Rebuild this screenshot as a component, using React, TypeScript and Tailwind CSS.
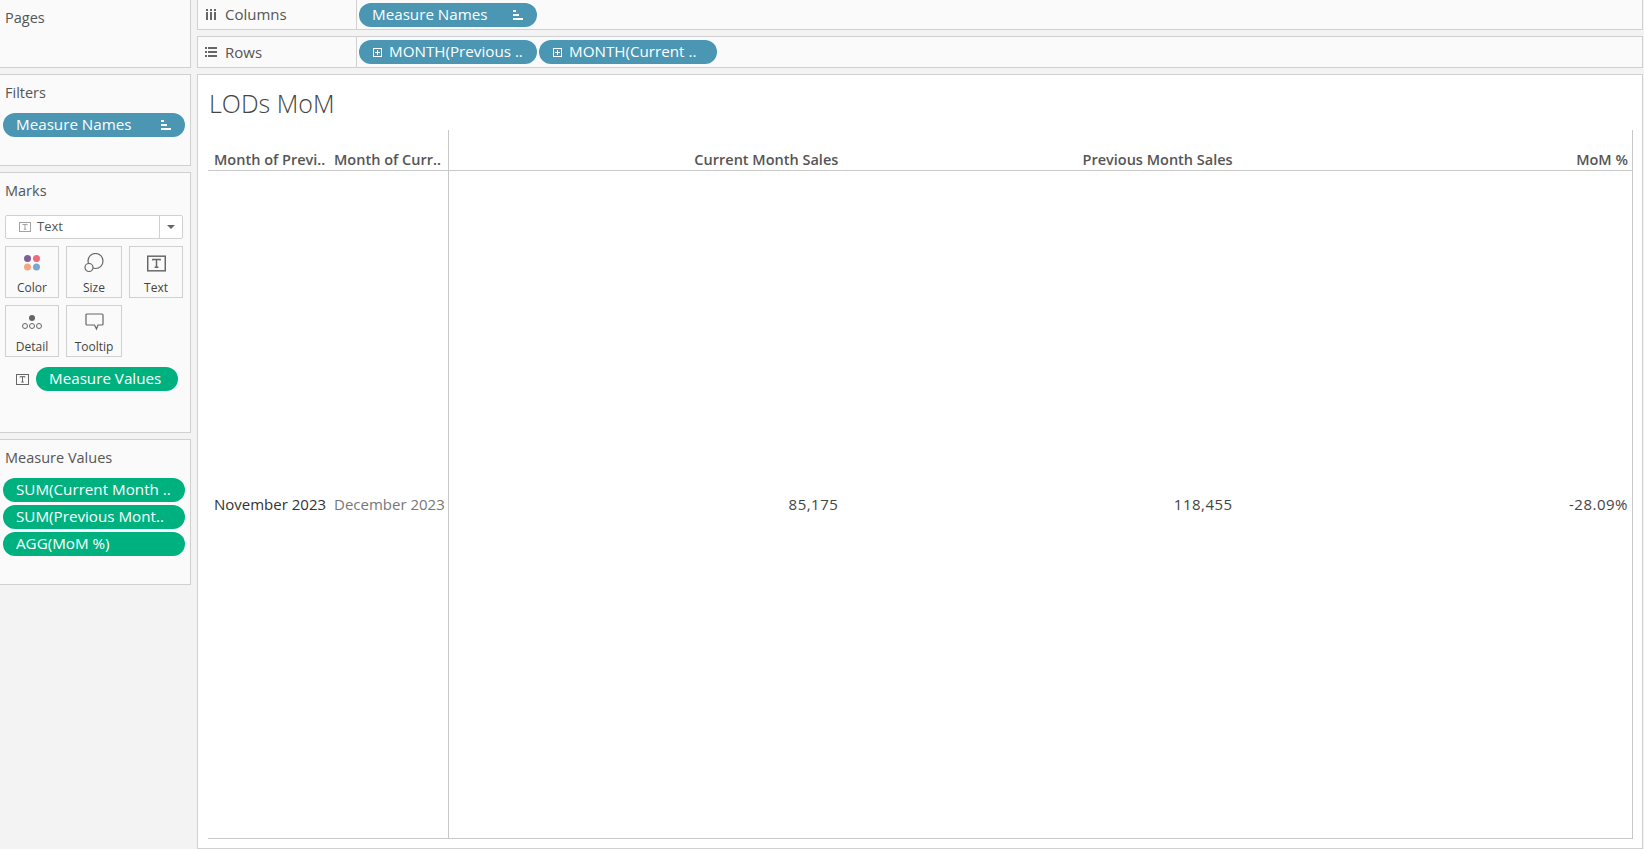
const font = "font-['Open_Sans',sans-serif]"

function SortIcon() {
  return (
    <svg width="10" height="10" viewBox="0 0 10 10" className="shrink-0" fill="#fff">
      <rect x="0" y="0" width="3" height="2" />
      <rect x="0" y="4" width="6" height="2" />
      <rect x="0" y="8" width="10" height="2" />
    </svg>
  )
}

function PlusBox() {
  return (
    <svg width="9" height="9" viewBox="0 0 9 9" className="shrink-0" fill="none" stroke="#fff" strokeWidth="1" shapeRendering="crispEdges">
      <rect x="0.5" y="0.5" width="8" height="8" />
      <path d="M2 4.5h5M4.5 2v5" />
    </svg>
  )
}

function TBox({ size = 13, color = "#777" }: { size?: number; color?: string }) {
  return (
    <svg width={size} height={size - 2} viewBox="0 0 13 11" className="shrink-0" fill="none" stroke={color} strokeWidth="1">
      <rect x="0.5" y="0.5" width="12" height="10" />
      <path d="M4 3.500V2.700h5v0.800M6.500 2.700v5.300M5.200 8h2.600" />
    </svg>
  )
}

function Pill({ label, color, width, plus, sort }: { label: string; color: string; width: string; plus?: boolean; sort?: boolean }) {
  return (
    <div className={`${color} ${width} flex h-6 shrink-0 items-center rounded-full pl-[13px] pr-[14px] text-[15.2px] leading-none text-white`}>
      {plus && <span className="mr-[7px] ml-[1px] flex"><PlusBox /></span>}
      <span className="flex-1 whitespace-nowrap">{label}</span>
      {sort && <SortIcon />}
    </div>
  )
}

function Panel({ title, height, noTop, children }: { title: string; height: string; noTop?: boolean; children?: React.ReactNode }) {
  return (
    <div className={`${height} ${noTop ? "" : "border-t"} border-b border-r border-[#d0d0d0] bg-[#fafafa]`}>
      <div className="px-[5px] pt-[8px] text-[14.5px] leading-[20px] text-[#555]">{title}</div>
      {children}
    </div>
  )
}

function MarkCard({ label, width, children }: { label: string; width: string; children: React.ReactNode }) {
  return (
    <div className={`${width} flex h-[52px] flex-col items-center border border-[#d0d0d0] bg-[#fafafa] pt-[5px]`}>
      <div className="flex h-[22px] items-center justify-center">{children}</div>
      <div className="mt-[7px] text-[12px] leading-[14px] text-[#444]">{label}</div>
    </div>
  )
}

function Shelf({ label, icon, height, children }: { label: string; icon: React.ReactNode; height: string; children: React.ReactNode }) {
  return (
    <div className={`${height} flex items-center border-x border-b border-[#d0d0d0] bg-[#fafafa]`}>
      <div className="flex h-full w-[159px] shrink-0 items-center border-r border-[#d0d0d0] pl-[7px] text-[15px] text-[#555]">
        <span className="mr-[8px] flex w-[12px] justify-center">{icon}</span>
        {label}
      </div>
      <div className="flex items-center gap-[2px] pl-[2px]">{children}</div>
    </div>
  )
}

export default function App() {
  return (
    <div className={`${font} flex h-[849px] w-[1644px] gap-[6px] overflow-hidden bg-[#f3f3f3] pr-[1px]`}>
      {/* left cards */}
      <div className="flex w-[191px] shrink-0 flex-col gap-[6px]">
        <Panel title="Pages" height="h-[68px]" noTop />

        <Panel title="Filters" height="h-[92px]">
          <div className="mt-[10px] pl-[3px]">
            <Pill label="Measure Names" color="bg-[#4a96b3]" width="w-[182px]" sort />
          </div>
        </Panel>

        <Panel title="Marks" height="h-[261px]">
          <div className="mt-[14px] flex flex-col pl-[5px]">
            <div className="flex h-[24px] w-[178px] items-center rounded-[2px] border border-[#d0d0d0] bg-white">
              <div className="flex flex-1 items-center pl-[13px] text-[13px] text-[#555]">
                <TBox size={12} color="#999" />
                <span className="ml-[6px]">Text</span>
              </div>
              <div className="flex h-full w-[23px] items-center justify-center border-l border-[#d0d0d0]">
                <div className="h-0 w-0 border-x-[4px] border-t-[4px] border-x-transparent border-t-[#666]" />
              </div>
            </div>

            <div className="mt-[7px] flex gap-[7px]">
              <MarkCard label="Color" width="w-[54px]">
                <svg width="18" height="18" viewBox="0 0 18 18">
                  <circle cx="4.500" cy="4.500" r="3.500" fill="#7b5f96" />
                  <circle cx="13.500" cy="4.500" r="3.500" fill="#f06a7c" />
                  <circle cx="4.500" cy="13" r="3.500" fill="#f4a77c" />
                  <circle cx="13.500" cy="13" r="3.500" fill="#7ba6d0" />
                </svg>
              </MarkCard>
              <MarkCard label="Size" width="w-[56px]">
                <svg width="20" height="20" viewBox="0 0 20 20" fill="none" stroke="#666" strokeWidth="1.2">
                  <circle cx="11.500" cy="8" r="7.500" />
                  <circle cx="5" cy="14.500" r="4" fill="#fafafa" />
                </svg>
              </MarkCard>
              <MarkCard label="Text" width="w-[54px]">
                <TBox size={19} color="#666" />
              </MarkCard>
            </div>

            <div className="mt-[7px] flex gap-[7px]">
              <MarkCard label="Detail" width="w-[54px]">
                <svg width="20" height="16" viewBox="0 0 20 16" fill="none" stroke="#666" strokeWidth="1">
                  <circle cx="10" cy="4" r="3" fill="#666" stroke="none" />
                  <circle cx="3" cy="12" r="2.500" />
                  <circle cx="10" cy="12" r="2.500" />
                  <circle cx="17" cy="12" r="2.500" />
                </svg>
              </MarkCard>
              <MarkCard label="Tooltip" width="w-[56px]">
                <svg width="19" height="18" viewBox="0 0 19 18" fill="none" stroke="#666" strokeWidth="1.2">
                  <path d="M2 1h15a1 1 0 0 1 1 1v9a1 1 0 0 1-1 1h-4l-1.500 4-2-4H2a1 1 0 0 1-1-1V2a1 1 0 0 1 1-1z" />
                </svg>
              </MarkCard>
            </div>

            <div className="mt-[10px] flex items-center pl-[11px]">
              <TBox size={13} color="#666" />
              <div className="ml-[7px]">
                <Pill label="Measure Values" color="bg-[#00b180]" width="w-[142px]" />
              </div>
            </div>
          </div>
        </Panel>

        <Panel title="Measure Values" height="h-[146px]">
          <div className="mt-[10px] flex flex-col gap-[3px] pl-[3px]">
            <Pill label="SUM(Current Month .." color="bg-[#00b180]" width="w-[182px]" />
            <Pill label="SUM(Previous Mont.." color="bg-[#00b180]" width="w-[182px]" />
            <Pill label="AGG(MoM %)" color="bg-[#00b180]" width="w-[182px]" />
          </div>
        </Panel>
      </div>

      {/* shelves and view */}
      <div className="flex min-w-0 flex-1 flex-col">
        <Shelf
          label="Columns"
          height="h-[30px]"
          icon={
            <svg width="11" height="11" viewBox="0 0 11 11" fill="#666">
              <rect x="0" y="3" width="2" height="8" />
              <rect x="4" y="3" width="2" height="8" />
              <rect x="8" y="3" width="2" height="8" />
              <rect x="0" y="0" width="2" height="2" />
              <rect x="4" y="0" width="2" height="2" />
              <rect x="8" y="0" width="2" height="2" />
            </svg>
          }
        >
          <Pill label="Measure Names" color="bg-[#4a96b3]" width="w-[178px]" sort />
        </Shelf>

        <div className="mt-[6px] border-t border-[#d0d0d0]">
          <Shelf
            label="Rows"
            height="h-[31px]"
            icon={
              <svg width="12" height="10" viewBox="0 0 12 10" fill="#666">
                <rect x="0" y="0" width="2" height="2" />
                <rect x="3" y="0" width="9" height="2" />
                <rect x="0" y="4" width="2" height="2" />
                <rect x="3" y="4" width="9" height="2" />
                <rect x="0" y="8" width="2" height="2" />
                <rect x="3" y="8" width="9" height="2" />
              </svg>
            }
          >
            <Pill label="MONTH(Previous .." color="bg-[#4a96b3]" width="w-[178px]" plus />
            <Pill label="MONTH(Current .." color="bg-[#4a96b3]" width="w-[178px]" plus />
          </Shelf>
        </div>

        <div className="mt-[6px] flex flex-1 flex-col border border-[#d0d0d0] bg-white pb-[9px] pl-[10px] pr-[9px]">
          <div className="h-[55px] pl-[1px] pt-[11px] text-[25px] font-light leading-[34px] text-[#444]">LODs MoM</div>

          <div className="flex flex-1 flex-col border-b border-[#c8c8c8]">
            <div className="flex h-[41px] border-b border-[#c8c8c8] text-[14.5px] font-semibold leading-[18px] text-[#555]">
              <div className="flex w-[241px] shrink-0 items-end border-r border-[#c8c8c8] pb-[1px]">
                <span className="w-[126px] whitespace-nowrap pl-[6px]">Month of Previ..</span>
                <span className="whitespace-nowrap">Month of Curr..</span>
              </div>
              <div className="grid flex-1 grid-cols-3 items-end border-r border-[#c8c8c8] pb-[1px] text-right">
                <span className="pr-[5px]">Current Month Sales</span>
                <span className="pr-[5px]">Previous Month Sales</span>
                <span className="pr-[4px]">MoM %</span>
              </div>
            </div>
            <div className="flex flex-1 items-center text-[15px] text-[#444]">
              <div className="flex h-full w-[241px] shrink-0 items-center border-r border-[#c8c8c8]">
                <span className="w-[126px] whitespace-nowrap pl-[6px] text-[#333]">November 2023</span>
                <span className="whitespace-nowrap text-[#777]">December 2023</span>
              </div>
              <div className="grid h-full flex-1 grid-cols-3 items-center border-r border-[#c8c8c8] text-right tracking-[0.5px]">
                <span className="pr-[5px]">85,175</span>
                <span className="pr-[5px]">118,455</span>
                <span className="pr-[4px]">-28.09%</span>
              </div>
            </div>
          </div>
        </div>
      </div>
    </div>
  )
}
